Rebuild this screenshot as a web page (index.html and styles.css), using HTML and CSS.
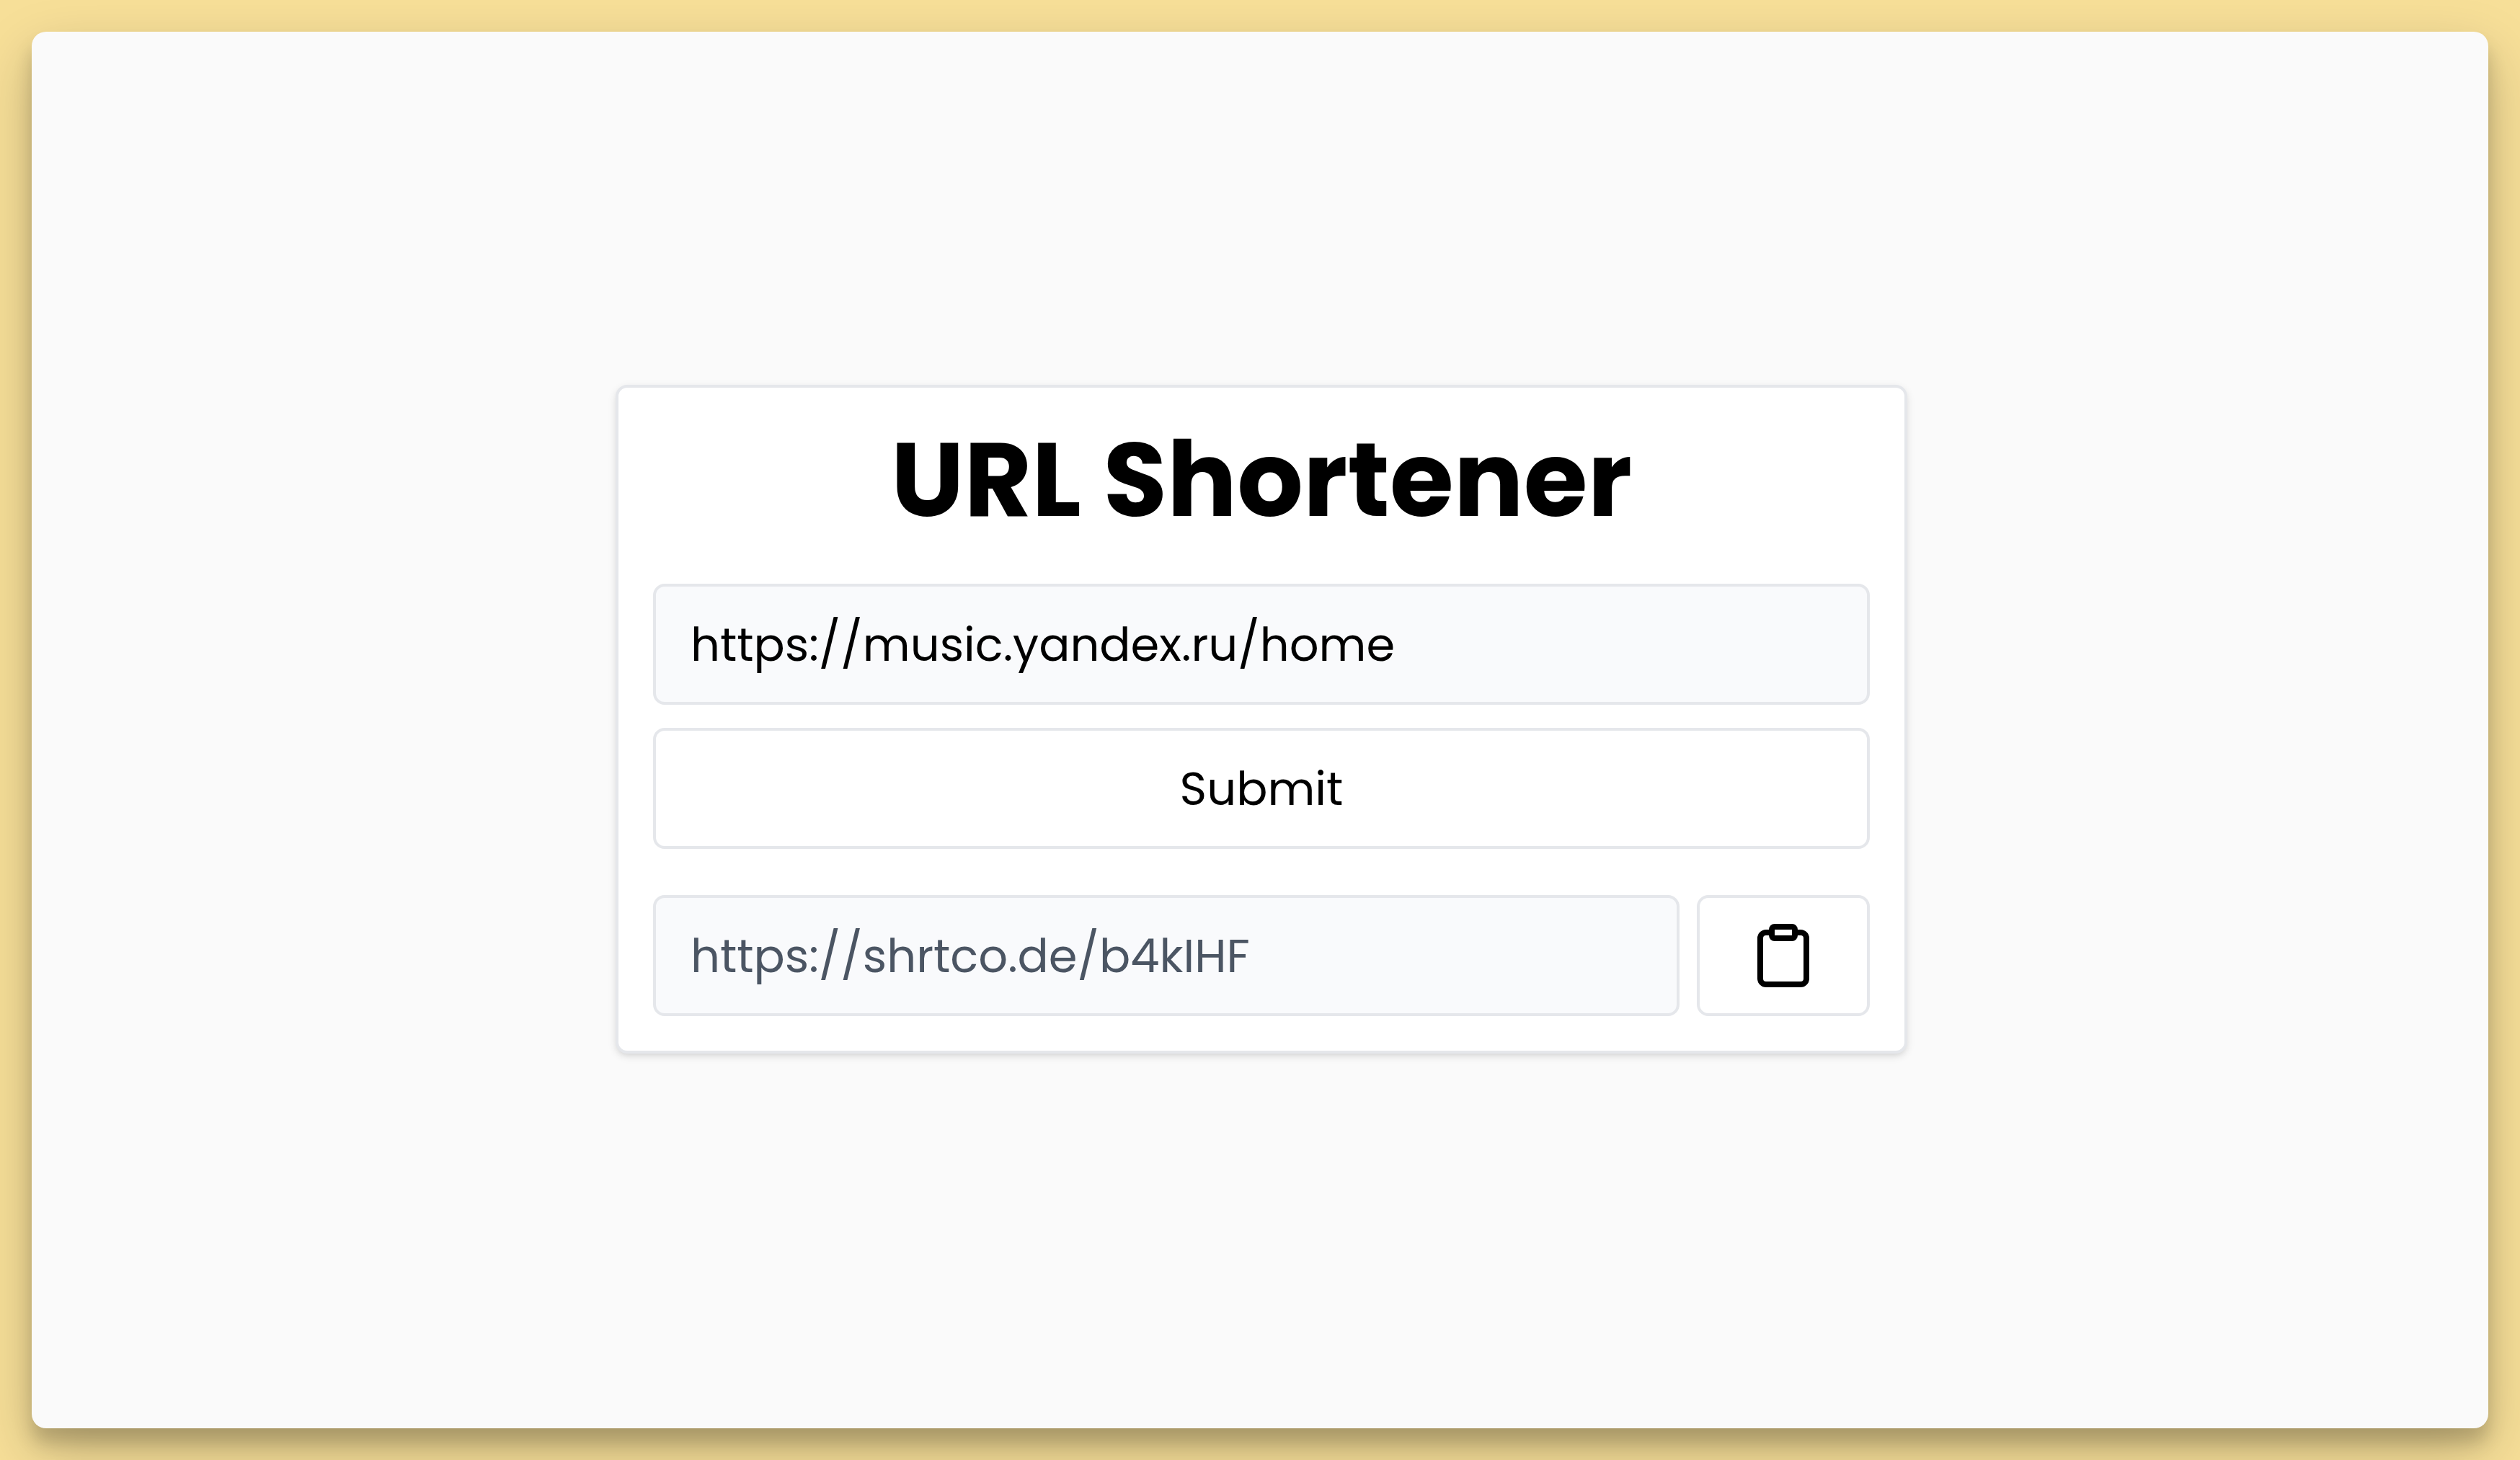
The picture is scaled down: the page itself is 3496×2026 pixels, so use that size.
FILE: index.html
```html
<!DOCTYPE html>
<html lang="en">
<head>
  <meta charset="utf-8">
  <meta name="viewport" content="width=device-width, initial-scale=1">
  <title>URL Shortener</title>
  <link rel="stylesheet" href="styles.css">
</head>
<body>
  <main class="window">
    <section class="card">
      <h1 class="title">URL Shortener</h1>
      <form class="form">
        <input class="field" type="text" aria-label="URL to shorten" value="https://music.yandex.ru/home">
        <button class="button" type="submit">Submit</button>
      </form>
      <div class="result">
        <input class="field field-result" type="text" aria-label="Short URL" value="https://shrtco.de/b4kIHF" readonly>
        <button class="button button-copy" type="button" aria-label="Copy to clipboard">
          <svg class="icon" viewBox="0 0 24 24" aria-hidden="true">
            <path d="M16 4h2a2 2 0 0 1 2 2v14a2 2 0 0 1-2 2H6a2 2 0 0 1-2-2V6a2 2 0 0 1 2-2h2"/>
            <rect x="8" y="2" width="8" height="4" rx="1" ry="1"/>
          </svg>
        </button>
      </div>
    </section>
  </main>
</body>
</html>
```
FILE: styles.css
```css
* {
  box-sizing: border-box;
}

body {
  margin: 0;
  min-height: 100vh;
  padding: 44px;
  display: flex;
  background: #f7df98;
  color: #000;
  font-family: Poppins, Inter, "Liberation Sans", sans-serif;
  font-size: 64px;
}

.window {
  flex: 1;
  display: flex;
  align-items: center;
  justify-content: center;
  padding: 0 0 30px 4px;
  border-radius: 20px;
  background: #fafafa;
  box-shadow: 0 32px 80px rgba(0, 0, 0, 0.22), 0 20px 24px rgba(0, 0, 0, 0.17);
}

.card {
  width: 100%;
  max-width: 1792px;
  padding: 48px;
  border: 4px solid #e5e7eb;
  border-radius: 16px;
  background: #fff;
  box-shadow: 0 4px 12px rgba(0, 0, 0, 0.1), 0 4px 8px -4px rgba(0, 0, 0, 0.1);
}

.title {
  margin: 0 0 64px;
  font-size: 144px;
  font-weight: 700;
  line-height: 160px;
  text-align: center;
}

.form {
  display: grid;
  gap: 32px;
  margin-bottom: 64px;
}

.field,
.button {
  width: 100%;
  height: 168px;
  border: 4px solid #e5e7eb;
  border-radius: 16px;
  color: inherit;
  font: inherit;
}

.field {
  padding: 0 48px;
  background: #f9fafc;
}

.button {
  padding: 0;
  background: #fff;
}

.result {
  display: flex;
  gap: 24px;
}

.field-result {
  flex: 1;
  min-width: 0;
  color: #4b5563;
}

.button-copy {
  flex: none;
  width: 240px;
  display: flex;
  align-items: center;
  justify-content: center;
}

.icon {
  width: 96px;
  height: 96px;
  fill: none;
  stroke: currentColor;
  stroke-width: 2;
  stroke-linecap: round;
  stroke-linejoin: round;
}
```
